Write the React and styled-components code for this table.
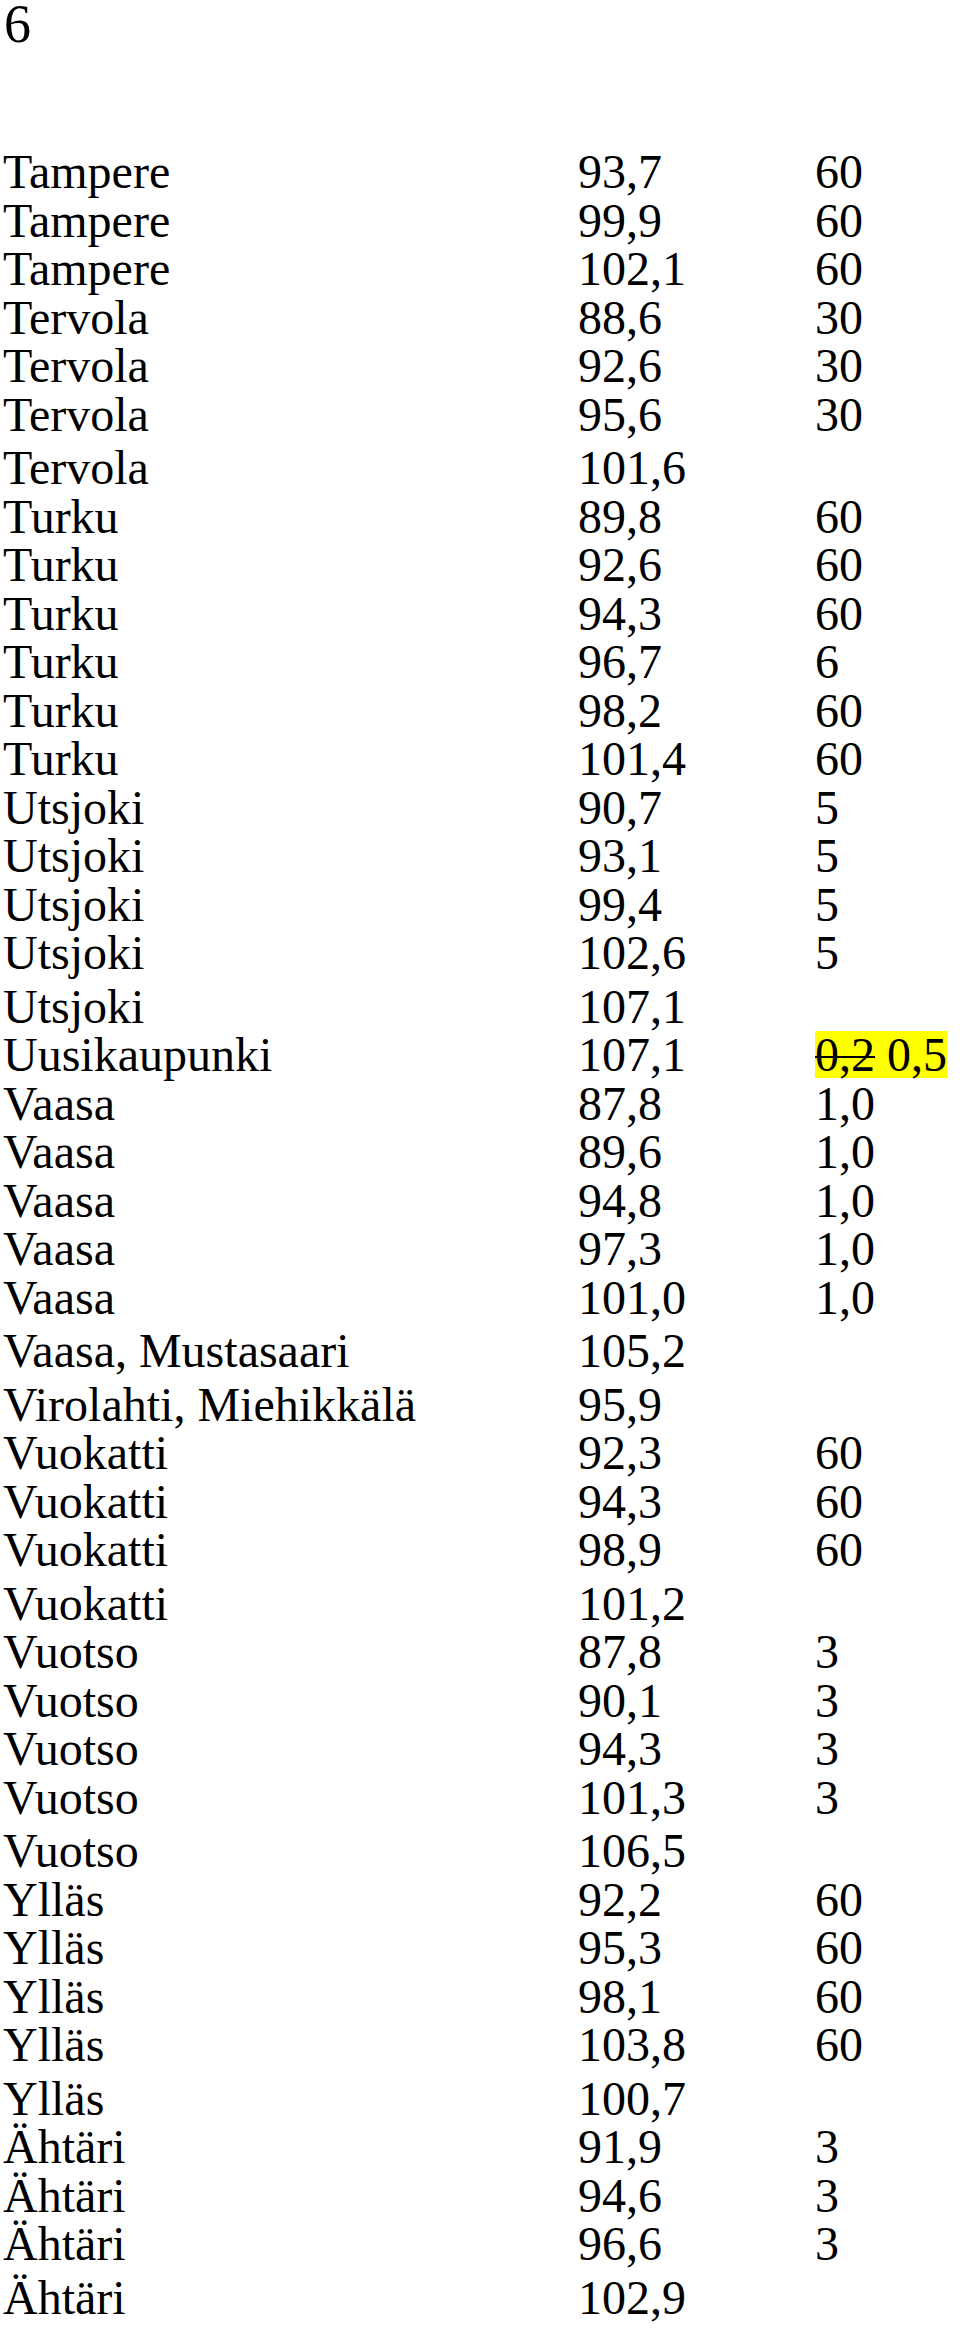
import * as React from 'react';
import styled, { createGlobalStyle } from 'styled-components';

const GlobalStyle = createGlobalStyle`
  html, body {
    margin: 0;
    padding: 0;
    background: #ffffff;
  }
  body {
    font-family: "Liberation Serif", "Times New Roman", serif;
    color: #000000;
  }
`;

const Page = styled.div`
  width: 960px;
  min-height: 2330px;
  padding-left: 3px;
  box-sizing: border-box;
`;

const PageNumber = styled.div`
  font-size: 54px;
  line-height: 48px;
  height: 48px;
  padding-left: 1px;
`;

const Table = styled.div`
  margin-top: 100px;
  display: grid;
  grid-template-columns: 575px 237px 1fr;
  font-size: 48px;
`;

const Cell = styled.div`
  line-height: 48.5px;
  height: 48.5px;
  white-space: nowrap;
  padding-top: ${({ $tall }) => ($tall ? '5px' : '0')};
`;

const Marked = styled.span`
  display: inline-block;
  background: #ffff00;
  line-height: 47px;
  height: 47px;
  vertical-align: baseline;
`;

const Struck = styled.span`
  text-decoration: line-through;
  text-decoration-thickness: 2px;
`;

const rows = [
  ['Tampere', '93,7', '60'],
  ['Tampere', '99,9', '60'],
  ['Tampere', '102,1', '60'],
  ['Tervola', '88,6', '30'],
  ['Tervola', '92,6', '30'],
  ['Tervola', '95,6', '30'],
  ['Tervola', '101,6', ''],
  ['Turku', '89,8', '60'],
  ['Turku', '92,6', '60'],
  ['Turku', '94,3', '60'],
  ['Turku', '96,7', '6'],
  ['Turku', '98,2', '60'],
  ['Turku', '101,4', '60'],
  ['Utsjoki', '90,7', '5'],
  ['Utsjoki', '93,1', '5'],
  ['Utsjoki', '99,4', '5'],
  ['Utsjoki', '102,6', '5'],
  ['Utsjoki', '107,1', ''],
  ['Uusikaupunki', '107,1', 'fix'],
  ['Vaasa', '87,8', '1,0'],
  ['Vaasa', '89,6', '1,0'],
  ['Vaasa', '94,8', '1,0'],
  ['Vaasa', '97,3', '1,0'],
  ['Vaasa', '101,0', '1,0'],
  ['Vaasa, Mustasaari', '105,2', ''],
  ['Virolahti, Miehikkälä', '95,9', ''],
  ['Vuokatti', '92,3', '60'],
  ['Vuokatti', '94,3', '60'],
  ['Vuokatti', '98,9', '60'],
  ['Vuokatti', '101,2', ''],
  ['Vuotso', '87,8', '3'],
  ['Vuotso', '90,1', '3'],
  ['Vuotso', '94,3', '3'],
  ['Vuotso', '101,3', '3'],
  ['Vuotso', '106,5', ''],
  ['Ylläs', '92,2', '60'],
  ['Ylläs', '95,3', '60'],
  ['Ylläs', '98,1', '60'],
  ['Ylläs', '103,8', '60'],
  ['Ylläs', '100,7', ''],
  ['Ähtäri', '91,9', '3'],
  ['Ähtäri', '94,6', '3'],
  ['Ähtäri', '96,6', '3'],
  ['Ähtäri', '102,9', ''],
];

const renderPower = (value) => {
  if (value !== 'fix') return value;
  return (
    <Marked>
      <Struck>0,2</Struck> 0,5
    </Marked>
  );
};

const App = () => {
  return (
    <Page>
      <GlobalStyle />
      <PageNumber>6</PageNumber>
      <Table>
        {rows.map(([place, freq, power], i) => {
          const tall = power === '';
          return (
            <React.Fragment key={i}>
              <Cell $tall={tall}>{place}</Cell>
              <Cell $tall={tall}>{freq}</Cell>
              <Cell $tall={tall}>{renderPower(power)}</Cell>
            </React.Fragment>
          );
        })}
      </Table>
    </Page>
  );
};

export default App;
